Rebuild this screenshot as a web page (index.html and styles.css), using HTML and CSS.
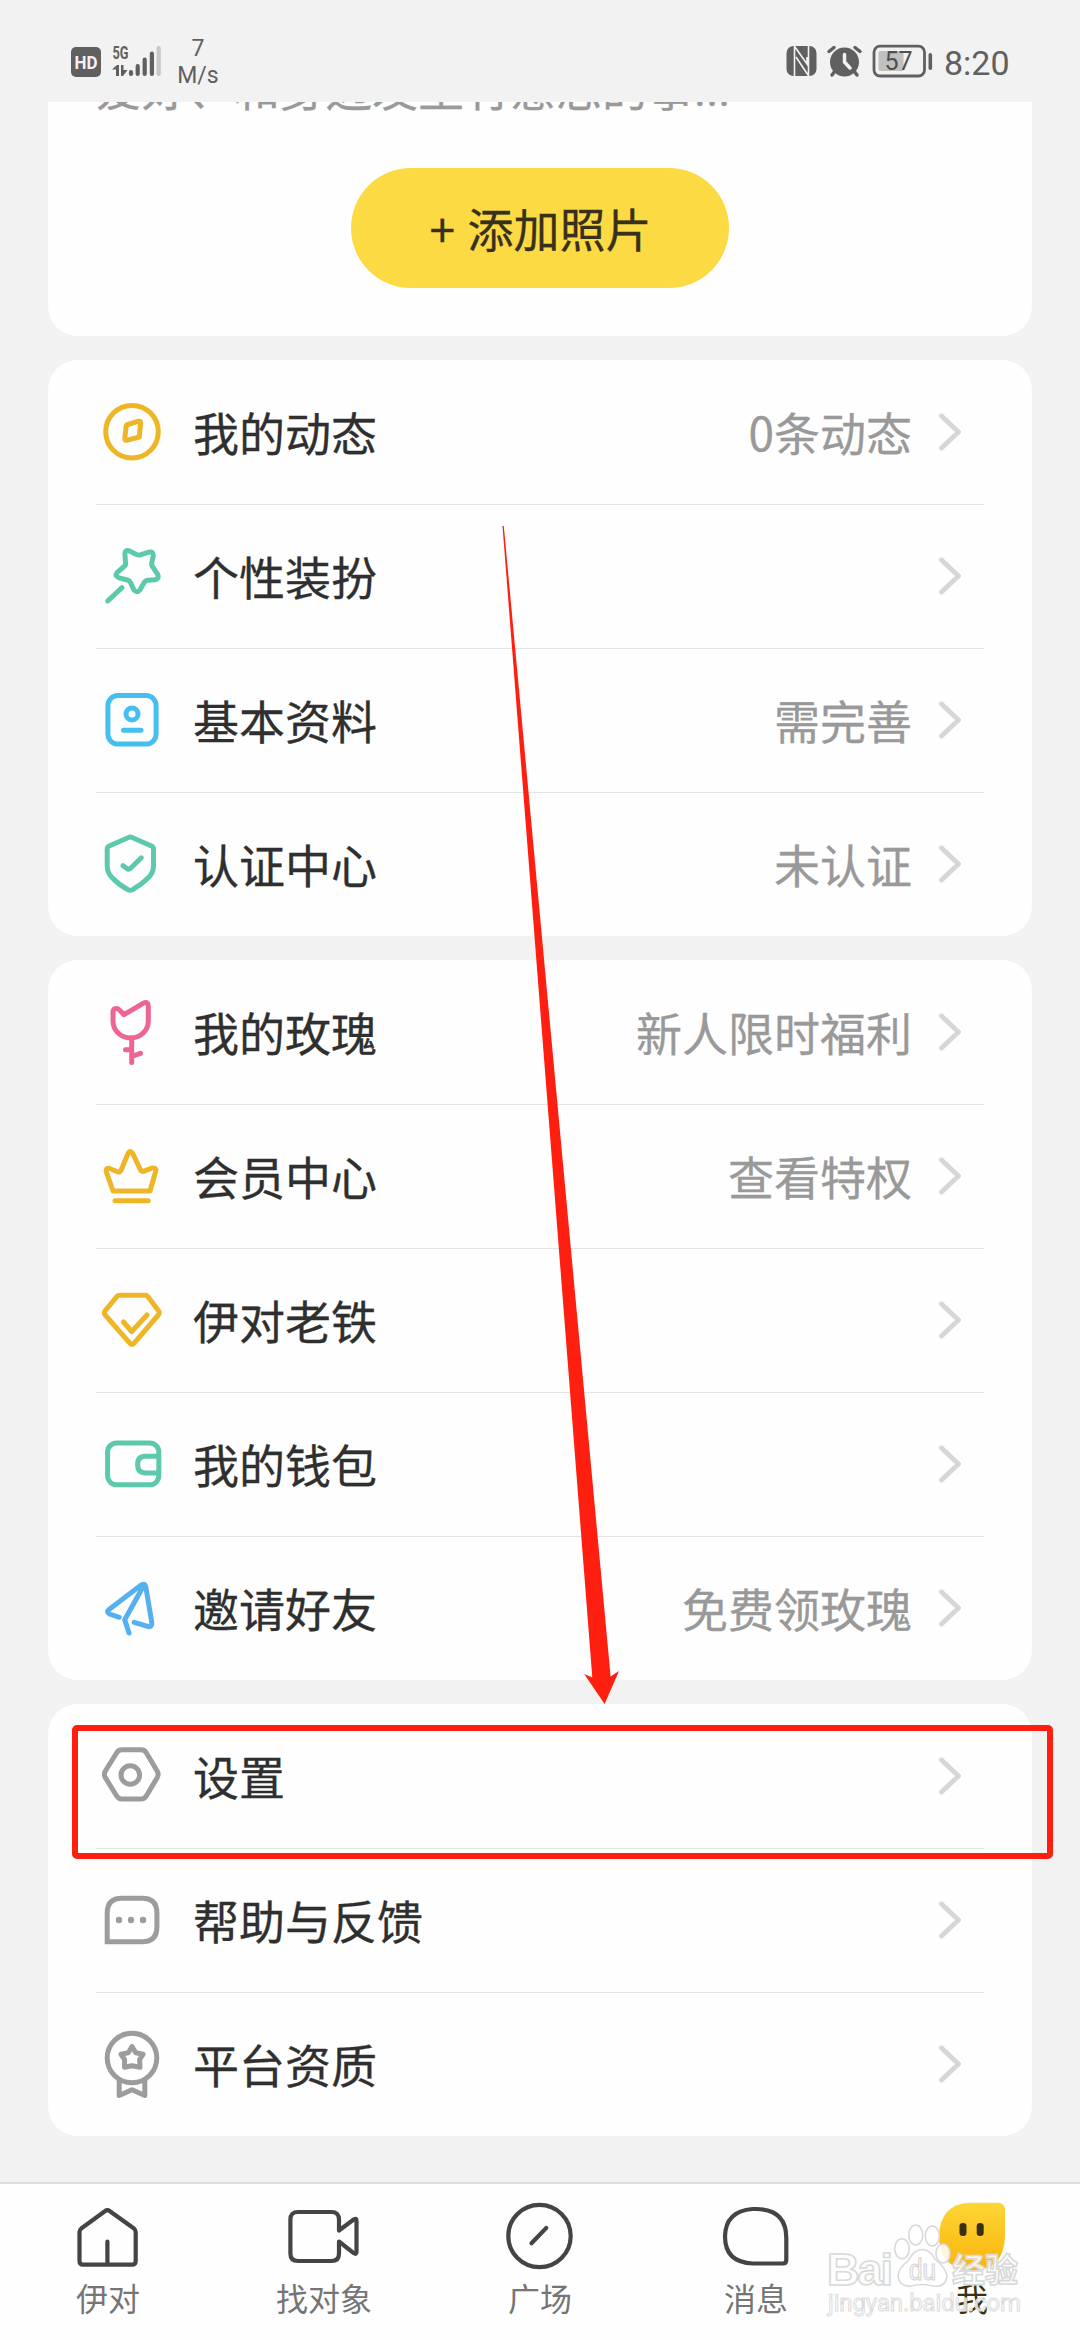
FILE: index.html
```html
<!DOCTYPE html>
<html lang="zh-CN">
<head>
  <meta charset="UTF-8">
  <title>我</title>
  <link rel="stylesheet" href="styles.css">
</head>

<body>

  <svg class="defs" width="0" height="0">
    <symbol id="arrow" viewBox="0 0 24 40">
      <path d="M4.5 4 L21.5 20 L4.5 36" fill="none" stroke="#d6d6d6" stroke-width="4.8" stroke-linecap="round" stroke-linejoin="round"/>
    </symbol>
  </svg>

  <!-- STATUS BAR -->
  <header class="status">
    <svg class="status-left" width="92" height="36" viewBox="0 0 92 36">
      <rect x="0" y="3" width="30" height="30" rx="5" fill="#606060"/>
      <text x="15" y="25" class="hd" textLength="23" lengthAdjust="spacingAndGlyphs">HD</text>
      <text x="41.5" y="15" class="net" textLength="16" lengthAdjust="spacingAndGlyphs">5G</text>
      <path d="M41 25.5 L46 21 H48 V32 H45 V25.5 Z M50 21 H52.5 V26 H56.5 L52 32 H50 Z" fill="#606060"/>
      <g stroke="#606060" stroke-width="4.2" stroke-linecap="round">
        <path d="M60 28.2 V30 M66.7 22.2 V30 M73.7 15.7 V30 M80.9 9.7 V30"/>
        <path d="M87.7 4.2 V30" stroke="#c8c8c8"/>
      </g>
    </svg>
    <div class="speed">7<br>M/s</div>
    <svg class="status-right" width="148" height="36" viewBox="0 0 148 36">
      <rect x="0.5" y="2" width="30" height="30" rx="7" fill="#606060"/>
      <path d="M8.5 2 V32 M9 3 L21 20 V13 M10 13 L22 31 M22.5 2 V32" fill="none" stroke="#f2f2f2" stroke-width="1.6"/>
      <circle cx="58.5" cy="18" r="14.5" fill="#606060"/>
      <path d="M43 7.5 L48 3.5 M74 7.5 L69 3.5 M49 27 L46 31 M68 27 L71 31" stroke="#606060" stroke-width="3.5" stroke-linecap="round"/>
      <path d="M58.5 10.5 V18 L64 24" fill="none" stroke="#f2f2f2" stroke-width="3.5" stroke-linecap="round"/>
      <rect x="88" y="2.2" width="50.5" height="29.8" rx="6" fill="none" stroke="#606060" stroke-width="2.8"/>
      <rect x="92.5" y="7" width="25" height="20" rx="2" fill="#c0c0c0"/>
      <text x="112.5" y="26" class="battery-num">57</text>
      <rect x="142.5" y="9" width="3.6" height="17" rx="1.8" fill="#606060"/>
    </svg>
    <div class="clock">8:20</div>
  </header>

  <main class="content">

    <section class="card intro">
      <p class="intro-text">爱好、和身边发生有意思的事<span class="dots">...</span></p>
      <button class="add-photo">+ 添加照片</button>
    </section>

    <section class="card">
      <div class="row">
        <svg class="icon gold" viewBox="0 0 72 72">
          <circle cx="36" cy="35.7" r="26.3"/>
          <path d="M32 28.5 L42.5 25.2 Q44.7 24.8 44.6 27 L43.3 41 L30.5 44.3 Q28.4 44.5 28.8 42.3 L30.1 30.5 Q30.3 29 32 28.5 Z"/>
        </svg>
        <span class="label">我的动态</span>
        <span class="value">0条动态</span>
        <svg class="chevron"><use href="#arrow"/></svg>
      </div>
      <div class="row">
        <svg class="icon mint" viewBox="0 0 72 72">
          <path d="M29.6 24 L28.9 13.5 Q29.2 9.5 33 10.7 L40.5 14.5 Q42.7 15.5 45 14.7 L53 12.2 Q58 11.5 57.2 16 L55.7 23 Q55.4 25 56.5 26.7 L61.8 34.5 Q63.8 38.5 59 39.7 L51.5 40.3 Q49.5 40.6 48.3 42.3 L44 49.8 Q40.7 53.5 37.8 49.8 L34.5 42.5 Q33.5 40.5 31.5 40 L23 37.8 Q18.2 35.8 21.3 32.3 L28 26.5 Q29.7 25.5 29.6 24 Z"/>
          <path d="M26 47.7 L11.7 61"/>
        </svg>
        <span class="label">个性装扮</span>
        <svg class="chevron"><use href="#arrow"/></svg>
      </div>
      <div class="row">
        <svg class="icon sky" viewBox="0 0 72 72">
          <rect x="11.9" y="11.5" width="48.2" height="48.6" rx="10"/>
          <circle cx="36" cy="30" r="6"/>
          <path d="M27.5 46.3 H45"/>
        </svg>
        <span class="label">基本资料</span>
        <span class="value">需完善</span>
        <svg class="chevron"><use href="#arrow"/></svg>
      </div>
      <div class="row">
        <svg class="icon mint" viewBox="0 0 72 72">
          <path d="M32.5 9.5 Q34.3 8.6 36.1 9.5 L55.5 18 Q57.5 19 57.5 21 V38 Q57.5 45 52 50 Q45 57 36.5 61.8 Q34.3 62.8 32.1 61.8 Q23 57 16.5 50 Q11.2 45 11.2 38 V21 Q11.2 19 13.2 18 Z"/>
          <path d="M27 37.7 L30.8 40.6 Q32.7 41.8 34.5 40.2 L45.3 29.8"/>
        </svg>
        <span class="label">认证中心</span>
        <span class="value">未认证</span>
        <svg class="chevron"><use href="#arrow"/></svg>
      </div>
    </section>

    <section class="card">
      <div class="row">
        <svg class="icon pink" viewBox="0 0 72 72">
          <path d="M17 16.5 Q17 12.5 20 12.5 Q22.3 12.3 24 14.5 L28 18.7 L47.5 7.2 Q52.3 5 52.3 10.5 V25 A17.6 17 0 0 1 17 25 Z"/>
          <path d="M35.7 42 V66.5 M29.5 53.7 H35.7 M44.5 57.3 L35.7 60.5"/>
        </svg>
        <span class="label">我的玫瑰</span>
        <span class="value">新人限时福利</span>
        <svg class="chevron"><use href="#arrow"/></svg>
      </div>
      <div class="row">
        <svg class="icon gold" viewBox="0 0 72 72">
          <path d="M17 51 L10.2 31.5 Q9.6 28 13 28.3 L22 32 Q24 32.3 25 30.5 L32 13.5 Q34.3 9.3 36.7 13.5 L44.5 30 Q45.5 31.8 47.5 31.3 L56 28 Q60.5 27.5 59.8 31 L54 51 Z"/>
          <path d="M19 60.7 H52.2"/>
        </svg>
        <span class="label">会员中心</span>
        <span class="value">查看特权</span>
        <svg class="chevron"><use href="#arrow"/></svg>
      </div>
      <div class="row">
        <svg class="icon gold" viewBox="0 0 72 72">
          <path d="M23.8 11.2 H49.5 Q50.8 11.2 51.6 12.2 L62.7 27 Q63.9 29.2 62.3 31 L38 59.3 Q36 61.3 34 59.3 L9.2 31 Q7.6 29.2 8.9 27 L21 12.4 Q22 11.2 23.8 11.2 Z"/>
          <path d="M27.5 38 L35.7 47.5 L51 31"/>
        </svg>
        <span class="label">伊对老铁</span>
        <svg class="chevron"><use href="#arrow"/></svg>
      </div>
      <div class="row">
        <svg class="icon mint" viewBox="0 0 72 72">
          <rect x="11.6" y="15" width="51.2" height="41.8" rx="9"/>
          <path d="M62 28.3 H49.5 Q41.6 28.3 41.6 36.6 Q41.6 45 49.5 45 H62"/>
        </svg>
        <span class="label">我的钱包</span>
        <svg class="chevron"><use href="#arrow"/></svg>
      </div>
      <div class="row">
        <svg class="icon blue" viewBox="0 0 72 72">
          <path d="M23.3 45.3 L13.5 42 Q10 40 13 37.5 L45.5 12.8 Q49 10.8 49.8 15 L55.8 50.5 Q56.2 55 52.5 54.7 L38.2 50.3"/>
          <path d="M48 13 L28.7 47.7 L33 61"/>
        </svg>
        <span class="label">邀请好友</span>
        <span class="value">免费领玫瑰</span>
        <svg class="chevron"><use href="#arrow"/></svg>
      </div>
    </section>

    <section class="card">
      <div class="row">
        <svg class="icon gray" viewBox="0 0 72 72">
          <path d="M26 9.8 H45 Q48.5 9.8 50.3 12.7 L61.3 31.2 Q63 34.3 61.3 37.4 L50.3 56 Q48.5 59 45 59 H26 Q22.5 59 20.7 56 L9.2 37.4 Q7.5 34.3 9.2 31.2 L20.7 12.7 Q22.5 9.8 26 9.8 Z"/>
          <circle cx="34.3" cy="35" r="9.3"/>
        </svg>
        <span class="label">设置</span>
        <svg class="chevron"><use href="#arrow"/></svg>
      </div>
      <div class="row">
        <svg class="icon gray" viewBox="0 0 72 72">
          <path class="sharp" d="M11.2 57.8 V29 Q11.2 14.2 26 14.2 H46 Q60.9 14.2 60.9 29 V43 Q60.9 57.8 46 57.8 Z"/>
          <g fill="#9c9c9c" stroke="none"><circle cx="23" cy="36" r="3.2"/><circle cx="35" cy="36" r="3.2"/><circle cx="47" cy="36" r="3.2"/></g>
        </svg>
        <span class="label">帮助与反馈</span>
        <svg class="chevron"><use href="#arrow"/></svg>
      </div>
      <div class="row">
        <svg class="icon gray" viewBox="0 0 72 72">
          <circle cx="36" cy="30" r="24.8"/>
          <path d="M36 18.6 L39.8 24.8 L47 26.3 L43.6 31.5 L44 39.3 L36 37.7 L28.5 39.3 L28.6 31.5 L25 26.3 L32.3 24.8 Z"/>
          <path d="M23.2 52 V67.5 L36 61.7 L48.8 67.5 V52"/>
        </svg>
        <span class="label">平台资质</span>
        <svg class="chevron"><use href="#arrow"/></svg>
      </div>
    </section>

  </main>

  <!-- BOTTOM NAV -->
  <nav class="tabs">
    <div class="tab">
      <svg class="tab-icon" viewBox="0 0 72 72">
        <path d="M33.2 11 Q35.4 9.2 37.6 11 L62 28.5 Q63.7 30 63.7 32 V61 Q63.7 64.7 60 64.7 H11.2 Q7.5 64.7 7.5 61 V32 Q7.5 30 9.2 28.5 Z M35.4 41.5 V64"/>
      </svg>
      <span>伊对</span>
    </div>
    <div class="tab">
      <svg class="tab-icon" viewBox="0 0 72 72">
        <path d="M51 30.5 V19.5 Q51 12 43.5 12 H10 Q2.4 12 2.4 19.5 V53.5 Q2.4 61 10 61 H43.5 Q51 61 51 53.5 V41.5 L66 53.3 Q68.5 54.8 68.5 52 V20.5 Q68.5 17.8 66 19.3 Z"/>
      </svg>
      <span>找对象</span>
    </div>
    <div class="tab">
      <svg class="tab-icon" viewBox="0 0 72 72">
        <circle cx="35.5" cy="36" r="31.2"/>
        <path d="M27.5 43.3 L42.3 27.9"/>
      </svg>
      <span>广场</span>
    </div>
    <div class="tab">
      <svg class="tab-icon" viewBox="0 0 72 72">
        <path d="M32.5 9 H36 Q66.3 9.5 66.3 38 V60 Q66.3 63.5 63 63.5 H33 Q5 62.5 5 36.5 Q5.5 11 32.5 9 Z"/>
      </svg>
      <span>消息</span>
    </div>
    <div class="tab active">
      <svg class="tab-icon" viewBox="0 0 72 72">
        <defs>
          <linearGradient id="face" x1="0" y1="0" x2="0" y2="1">
            <stop offset="0" stop-color="#fdd535"/>
            <stop offset="1" stop-color="#fbb40c"/>
          </linearGradient>
        </defs>
        <path d="M34 2.7 H62 Q69 3 69 10 V36 Q68 70.5 36 70.5 Q3 69 3 36 Q4 4 34 2.7 Z" fill="url(#face)" stroke="none"/>
        <rect x="23.5" y="23" width="7" height="13" rx="3.3" fill="#3a3010" stroke="none"/>
        <rect x="40.7" y="23" width="7" height="13" rx="3.3" fill="#3a3010" stroke="none"/>
      </svg>
      <span>我</span>
    </div>
  </nav>

  <!-- marks drawn over the page -->
  <div class="mark-box"></div>
  <svg class="mark-arrow" width="120" height="1180" viewBox="500 526 120 1180">
    <path d="M502.5 526 H503.8 L610.6 1676.5 L619 1671 L604.6 1704 L584.2 1674 L592.3 1677.5 Z" fill="#ff1f10"/>
  </svg>

  <svg class="watermark" width="210" height="110" viewBox="0 0 210 110">
    <g fill="#fff" fill-opacity=".85" stroke="#d9d9d9" stroke-width="1.6">
      <text x="7" y="70" class="wm-big" textLength="66">Bai</text>
      <ellipse cx="82" cy="33.7" rx="7.3" ry="10"/>
      <ellipse cx="95.7" cy="20" rx="7" ry="10"/>
      <ellipse cx="112.3" cy="21" rx="7" ry="10"/>
      <ellipse cx="123" cy="38.5" rx="7" ry="9.5"/>
      <path d="M102 34.5 Q110 34.5 115 44 Q127 54 127 62 Q125 73 113 71 Q102 68 91 71 Q79 72 78 61 Q78 54 88 46 Q94 34.5 102 34.5 Z"/>
      <text x="132" y="67" class="wm-cn">经验</text>
    </g>
    <text x="89" y="65" class="wm-du" textLength="27" lengthAdjust="spacingAndGlyphs">du</text>
    <text x="8" y="96" class="wm-url" textLength="193">jingyan.baidu.com</text>
  </svg>

</body>
</html>
```

FILE: styles.css
```css
* {
  box-sizing: border-box;
}

body {
  font-family: "Noto Sans CJK SC", sans-serif;
  background: #f2f2f2;
  color: #2f2f2f;
  margin: 0;
  width: 1080px;
  height: 2340px;
  position: relative;
  display: flex;
  flex-direction: column;
  overflow: hidden;
}

.defs {
  position: absolute;
}

/* status bar */
.status {
  height: 102px;
  flex: none;
  display: flex;
  align-items: flex-start;
  padding: 44px 71px 0 71px;
  color: #606060;
  font-family: Roboto, sans-serif;
}

.speed {
  width: 60px;
  margin: -9px 0 0 4px;
  font-size: 23px;
  line-height: 27px;
  text-align: center;
  padding-left: 2px;
}

.status-right {
  margin-left: auto;
}

.clock {
  font-size: 34px;
  line-height: 40px;
  width: 65px;
  margin-left: 10px;
  margin-top: -1px;
  white-space: nowrap;
}

.hd {
  font: 700 19px Roboto, sans-serif;
  fill: #f2f2f2;
  text-anchor: middle;
}

.net {
  font: 700 19px Roboto, sans-serif;
  fill: #606060;
}

.battery-num {
  font: 400 25px Roboto, sans-serif;
  fill: #505050;
  text-anchor: middle;
}

/* cards */
.content {
  flex: 1;
  display: flex;
  flex-direction: column;
  gap: 24px;
  padding: 0 48px;
}

.card {
  background: #fefefe;
  border-radius: 30px;
  padding: 0 48px;
}

.intro {
  height: 234px;
  border-radius: 0 0 30px 30px;
  overflow: hidden;
  display: flex;
  flex-direction: column;
  align-items: center;
}

.intro-text {
  align-self: flex-start;
  height: 60px;
  margin: -46px 0 52px;
  font-size: 46px;
  line-height: 60px;
  color: #999;
  -webkit-text-stroke: 0.3px;
}

.dots {
  font-family: Roboto, sans-serif;
  line-height: 1;
}

.add-photo {
  width: 378px;
  height: 120px;
  flex: none;
  border: none;
  border-radius: 60px;
  background: #fcda44;
  color: #37301a;
  font-family: inherit;
  font-size: 46px;
  word-spacing: 2px;
  padding: 0 0 3px 1px;
  -webkit-text-stroke: 0.3px;
}

.row {
  height: 144px;
  display: flex;
  align-items: center;
  font-size: 46px;
  line-height: 66px;
}

.row + .row {
  box-shadow: inset 0 1px #e3e3e3;
}

.icon {
  width: 72px;
  height: 72px;
  flex: none;
  margin-right: 25px;
  fill: none;
  stroke: currentColor;
  stroke-width: 5;
  stroke-linecap: round;
  stroke-linejoin: round;
}

.icon .sharp {
  stroke-linejoin: miter;
}

.gold { color: #eeb627; }
.mint { color: #5dc9ac; }
.sky { color: #45bff0; }
.pink { color: #ee6494; }
.blue { color: #55b0f0; }
.gray { color: #9c9c9c; }

.label,
.value {
  padding-bottom: 3px;
  -webkit-text-stroke: 0.3px;
}

.value {
  margin-left: auto;
  color: #999;
}

.chevron {
  width: 24px;
  height: 40px;
  flex: none;
  margin: 0 23px 0 auto;
}

.value + .chevron {
  margin-left: 25px;
}

/* bottom nav */
.tabs {
  height: 158px;
  flex: none;
  background: #fefefe;
  border-top: 2px solid #dcdcdc;
  display: grid;
  grid-template-columns: repeat(5, 1fr);
}

.tab {
  display: flex;
  flex-direction: column;
  align-items: center;
  padding-top: 16px;
  font-size: 32px;
  line-height: 40px;
  color: #757575;
}

.tab span {
  margin-top: 5px;
}

.tab-icon {
  width: 72px;
  height: 72px;
  fill: none;
  stroke: #444;
  stroke-width: 4.2;
  stroke-linecap: round;
  stroke-linejoin: round;
}

.active {
  color: #37320f;
}

/* overlays */
.mark-box {
  position: absolute;
  left: 72px;
  top: 1725px;
  width: 981px;
  height: 134px;
  border: 6px solid #ff1f10;
  border-radius: 5px;
}

.mark-arrow {
  position: absolute;
  left: 500px;
  top: 526px;
}

.watermark {
  position: absolute;
  left: 820px;
  top: 2215px;
}

.wm-big {
  font: 700 45px "Liberation Sans", sans-serif;
}

.wm-du {
  font: 400 29px "Liberation Sans", sans-serif;
  fill: #fff;
  stroke: #d4d4d4;
  stroke-width: 1.2;
}

.wm-cn {
  font: 700 33px "Noto Sans CJK SC", sans-serif;
}

.wm-url {
  font: 400 24px Roboto, sans-serif;
  fill: #fff;
  fill-opacity: .8;
  stroke: #dcdcdc;
  stroke-width: 1;
}
```
